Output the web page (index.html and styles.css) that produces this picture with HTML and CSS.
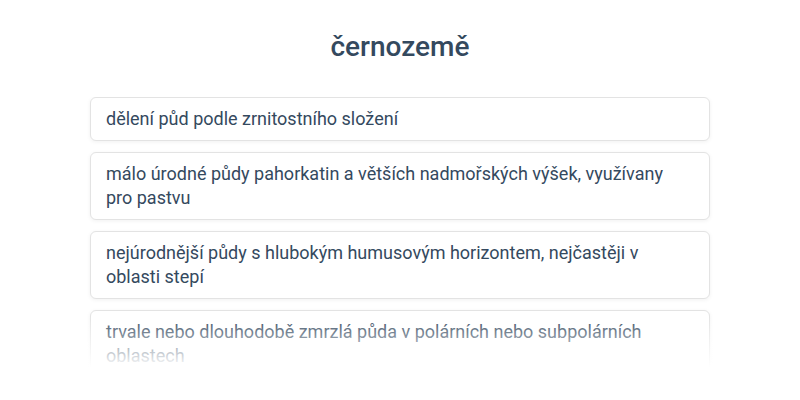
FILE: index.html
```html
<!DOCTYPE html>
<html lang="cs">
<head>
    <meta charset="UTF-8">
    <meta name="viewport" content="width=device-width, initial-scale=1.0">
    <title>Půdy</title>
    <link rel="stylesheet" href="styles.css">
</head>
<body>
    <h1>černozemě</h1>

    <!-- Answer options -->
    <div class="options">
        <div class="option">dělení půd podle zrnitostního složení</div>
        <div class="option">málo úrodné půdy pahorkatin a větších nadmořských výšek, využívany pro pastvu</div>
        <div class="option">nejúrodnější půdy s hlubokým humusovým horizontem, nejčastěji v oblasti stepí</div>
        <div class="option">trvale nebo dlouhodobě zmrzlá půda v polárních nebo subpolárních oblastech</div>
        <div class="fade"></div>
    </div>
</body>
</html>
```

FILE: styles.css
```css
body {
    font-family: Roboto, "Noto Sans", sans-serif;
    margin: 0;
    padding: 0;
    background-color: #ffffff;
    color: #34495e;
}
h1 {
    text-align: center;
    font-size: 28px;
    font-weight: 500;
    color: #34495e;
    margin: 0;
    padding-top: 29px;
    line-height: 36px;
}
.options {
    position: relative;
    width: 620px;
    margin: 32px auto 0;
    height: 280px;
    overflow: hidden;
    padding: 0 4px;
    box-sizing: content-box;
    display: flex;
    flex-direction: column;
    gap: 11px;
}
.option {
    flex-shrink: 0;
    background: white;
    border: 1px solid #e3e3e3;
    border-radius: 6px;
    box-shadow: 0 1px 4px rgba(0,0,0,0.06);
    padding: 9px 24px 9px 15px;
    font-size: 18px;
    line-height: 24px;
}
.fade {
    position: absolute;
    left: 0;
    right: 0;
    bottom: 0;
    height: 62px;
    background: linear-gradient(to bottom, rgba(255,255,255,0), #ffffff 85%);
}
```
